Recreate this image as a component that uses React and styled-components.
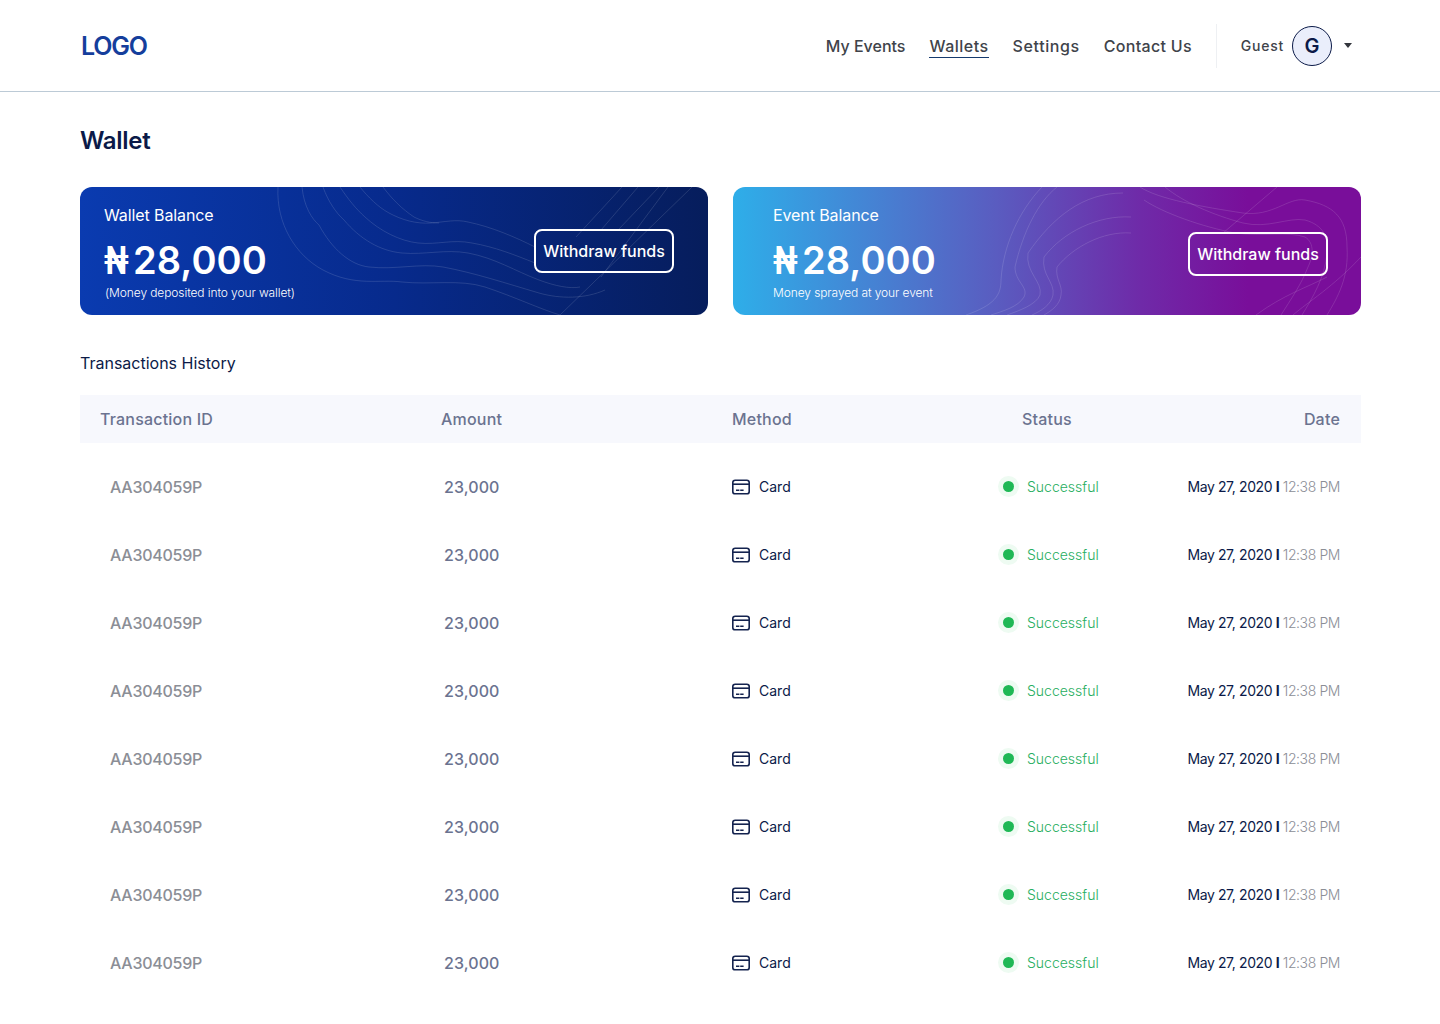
import React from 'react'
import styled, { createGlobalStyle } from 'styled-components'

const GlobalStyle = createGlobalStyle`
    * { box-sizing: border-box; }
    body {
        margin: 0;
        background: #ffffff;
        font-family: 'Inter', 'Liberation Sans', sans-serif;
        color: #0b1a48;
    }
`

const Header = styled.header`
    height: 92px;
    border-bottom: 1px solid #bccad6;
    display: flex;
    align-items: center;
    justify-content: space-between;
    padding: 0 88px 0 81px;
`

const Logo = styled.div`
    font-size: 25px;
    font-weight: 600;
    letter-spacing: -1.2px;
    color: #153e9c;
`

const HeaderRight = styled.div`
    display: flex;
    align-items: center;
`

const Nav = styled.nav`
    display: flex;
    gap: 24px;
    padding-right: 24px;
    height: 44px;
    align-items: center;
    border-right: 1px solid #eef0f3;
`

const NavLink = styled.a`
    font-size: 16px;
    font-weight: 500;
    letter-spacing: ${p => p.$track}px;
    line-height: 22px;
    color: #40434a;
    border-bottom: 1px solid ${p => (p.$active ? '#153a6e' : 'transparent')};
    padding-top: 1px;
    text-decoration: none;
`

const User = styled.div`
    display: flex;
    align-items: center;
    padding-left: 24px;
`

const Guest = styled.span`
    font-size: 14px;
    font-weight: 500;
    letter-spacing: 0.75px;
    color: #40434a;
    margin-right: 8px;
`

const Avatar = styled.div`
    width: 40px;
    height: 40px;
    border-radius: 50%;
    border: 1px solid #0b1a48;
    background: #eaeefb;
    display: flex;
    align-items: center;
    justify-content: center;
    font-size: 20px;
    font-weight: 600;
    color: #0b1a48;
`

const Caret = styled.span`
    width: 0;
    height: 0;
    margin-left: 12px;
    border-left: 4.5px solid transparent;
    border-right: 4.5px solid transparent;
    border-top: 5px solid #33363d;
`

const Main = styled.main`
    padding: 0 79px 0 80px;
`

const Title = styled.h1`
    margin: 0;
    padding-top: 33px;
    font-size: 24px;
    line-height: 32px;
    font-weight: 600;
    letter-spacing: -0.3px;
    color: #0b1a48;
`

const Cards = styled.section`
    display: grid;
    grid-template-columns: 628px 628px;
    gap: 25px;
    margin-top: 30px;
`

const Card = styled.div`
    position: relative;
    height: 128px;
    border-radius: 12px;
    overflow: hidden;
    color: #ffffff;
    background: ${p => p.$bg};
    display: flex;
    align-items: center;
    justify-content: space-between;
    padding: ${p => p.$padding};
`

const Contours = styled.svg`
    position: absolute;
    inset: 0;
    width: 100%;
    height: 100%;
    pointer-events: none;
    fill: none;
    stroke: rgba(255, 255, 255, 0.18);
    stroke-width: 0.7;
`

const CardText = styled.div`
    position: relative;
    display: flex;
    flex-direction: column;
    padding: 4px 0 1px;
`

const CardLabel = styled.div`
    font-size: 16px;
    line-height: 20px;
    font-weight: 400;
    letter-spacing: -0.1px;
`

const CardAmount = styled.div`
    display: flex;
    align-items: baseline;
    font-size: 38px;
    line-height: 48px;
    font-weight: 600;
    margin-top: 11px;
    letter-spacing: 0.1px;
`

const Naira = styled.span`
    display: inline-block;
    font-family: 'Roboto', 'Inter', sans-serif;
    font-weight: 700;
    letter-spacing: 0;
    margin-right: -2px;
    transform: scaleX(0.8);
    transform-origin: left center;
`

const CardNote = styled.div`
    font-size: 12px;
    line-height: 16px;
    font-weight: 300;
    letter-spacing: -0.1px;
    margin-left: ${p => (p.$indent ? '1px' : '0')};
`

const WithdrawButton = styled.button`
    position: relative;
    width: 140px;
    height: 44px;
    border: 2px solid #ffffff;
    border-radius: 8px;
    background: transparent;
    color: #ffffff;
    font-family: inherit;
    font-size: 16px;
    font-weight: 500;
    letter-spacing: 0;
    padding: 0;
    top: ${p => p.$top}px;
`

const SectionTitle = styled.h2`
    margin: 36px 0 0;
    font-size: 16px;
    line-height: 24px;
    font-weight: 400;
    letter-spacing: 0;
    color: #0b1a48;
`

const TableHead = styled.div`
    display: grid;
    grid-template-columns: 341px 291px 290px 1fr auto;
    align-items: center;
    height: 48px;
    margin-top: 20px;
    padding: 0 21px 0 20px;
    background: #f7f8fd;
    font-size: 16px;
    font-weight: 500;
    letter-spacing: 0.2px;
    color: #6b7390;
`

const Rows = styled.div`
    padding-top: 10px;
`

const Row = styled.div`
    display: grid;
    grid-template-columns: 334px 288px 271px 1fr auto;
    align-items: center;
    height: 68px;
    padding: 0 21px 0 30px;
`

const TxId = styled.div`
    font-size: 16px;
    font-weight: 500;
    letter-spacing: -0.25px;
    color: #8b8e96;
`

const Amount = styled.div`
    font-size: 16px;
    font-weight: 500;
    letter-spacing: 0.1px;
    color: #6b7390;
`

const Method = styled.div`
    display: flex;
    align-items: center;
    gap: 9px;
    font-size: 14px;
    color: #0b1a48;
`

const MethodName = styled.span`
    padding-bottom: 2px;
`

const Status = styled.div`
    display: flex;
    align-items: center;
    gap: 13px;
    padding-bottom: 2px;
    font-size: 14px;
    font-weight: 300;
    color: #27ae60;
`

const Dot = styled.span`
    width: 11px;
    height: 11px;
    border-radius: 50%;
    background: #1fb855;
    box-shadow: 0 0 0 5px #eefbf2;
`

const DateCell = styled.div`
    white-space: nowrap;
    text-align: right;
    padding-bottom: 2px;
    font-size: 14px;
    letter-spacing: -0.4px;
    color: #0b1a48;
`

const Time = styled.span`
    font-weight: 300;
    color: #8b8e96;
`

const CardIcon = () => (
    <svg width="18" height="16" viewBox="0 0 18 16" fill="none" stroke="#14234f" strokeWidth="1.6">
        <rect x="0.8" y="1.2" width="16.4" height="13.6" rx="2.4" />
        <path d="M1 5.2h16" />
        <path d="M4 11.2h3.4M8.2 11.2h3.4" />
    </svg>
)

const WalletLines = () => (
    <Contours viewBox="0 0 628 128" preserveAspectRatio="none">
        <path d="M198 0C196 36 215 68 243 83C275 100 300 92 322 95C350 98 380 92 405 100C435 110 460 122 480 128" />
        <path d="M222 0C224 20 232 32 239 38C252 62 270 78 289 80C315 83 340 76 363 80C395 86 425 96 459 106C480 112 505 112 525 103" />
        <path d="M243 0C248 14 256 26 264 33C280 52 300 64 322 66C345 68 365 62 388 66C415 71 435 84 459 93C475 99 490 102 500 100" />
        <path d="M260 0C268 12 276 22 285 30C300 44 320 54 338 56C358 58 372 52 392 56C415 60 435 68 455 76" />
        <path d="M280 0C288 10 298 20 309 26C322 33 336 37 351 36C365 35 376 32 388 35C412 40 435 50 455 60" />
        <path d="M303 0C312 12 322 22 334 30C342 34 350 36 359 36" />
        <path d="M480 128L612 0" />
        <path d="M521 90L588 0" />
        <path d="M538 43L579 0" />
        <path d="M521 43L558 0" />
        <path d="M496 50L542 0" />
    </Contours>
)

const EventLines = () => (
    <Contours viewBox="0 0 628 128" preserveAspectRatio="none">
        <path d="M309 0C285 25 270 60 268 93C268 108 262 118 233 128" />
        <path d="M324 0C305 15 290 45 282 80C282 95 296 100 291 110C285 120 270 124 258 128" />
        <path d="M390 6C350 6 320 30 295 66C292 85 310 95 307 108C303 118 285 124 274 128" />
        <path d="M398 30C365 28 330 45 311 70C308 88 322 95 320 108C318 118 308 124 299 128" />
        <path d="M398 46C370 44 340 60 324 80C322 92 330 98 328 108C327 118 318 124 311 128" />
        <path d="M407 0C425 12 470 20 510 26C540 30 555 10 572 13C600 18 614 30 614 60C616 90 605 110 594 128" />
        <path d="M432 0C450 15 480 28 510 36C535 42 555 30 572 33C590 38 596 50 594 66C592 90 580 110 569 128" />
        <path d="M411 13C430 26 470 40 502 46C530 50 555 44 572 50C582 56 580 70 575 80C568 98 558 112 548 128" />
        <path d="M490 46L544 0" />
        <path d="M523 128C550 108 575 100 594 90" />
        <path d="M560 128C575 115 600 100 628 70" />
    </Contours>
)

const rows = Array.from({ length: 8 }, (_, i) => i)

const App = () => {
    return (
        <>
            <GlobalStyle />
            <Header>
                <Logo>LOGO</Logo>
                <HeaderRight>
                    <Nav>
                        <NavLink $track={0}>My Events</NavLink>
                        <NavLink $track={0.5} $active>Wallets</NavLink>
                        <NavLink $track={0.6}>Settings</NavLink>
                        <NavLink $track={0.3}>Contact Us</NavLink>
                    </Nav>
                    <User>
                        <Guest>Guest</Guest>
                        <Avatar>G</Avatar>
                        <Caret />
                    </User>
                </HeaderRight>
            </Header>
            <Main>
                <Title>Wallet</Title>
                <Cards>
                    <Card $bg="linear-gradient(90deg, #0a3bb0 0%, #072a8c 50%, #061d5c 100%)" $padding="0 34px 0 24px">
                        <WalletLines />
                        <CardText>
                            <CardLabel>Wallet Balance</CardLabel>
                            <CardAmount><Naira>₦</Naira>28,000</CardAmount>
                            <CardNote $indent>(Money deposited into your wallet)</CardNote>
                        </CardText>
                        <WithdrawButton $top={0}>Withdraw funds</WithdrawButton>
                    </Card>
                    <Card $bg="linear-gradient(90deg, #2eaee9 0%, #5a5cc0 42%, #6f2aa8 65%, #790e9a 82%, #790e9a 100%)" $padding="0 33px 0 40px">
                        <EventLines />
                        <CardText>
                            <CardLabel>Event Balance</CardLabel>
                            <CardAmount><Naira>₦</Naira>28,000</CardAmount>
                            <CardNote>Money sprayed at your event</CardNote>
                        </CardText>
                        <WithdrawButton $top={3}>Withdraw funds</WithdrawButton>
                    </Card>
                </Cards>
                <SectionTitle>Transactions History</SectionTitle>
                <TableHead>
                    <div>Transaction ID</div>
                    <div>Amount</div>
                    <div>Method</div>
                    <div>Status</div>
                    <div>Date</div>
                </TableHead>
                <Rows>
                    {rows.map(i => (
                        <Row key={i}>
                            <TxId>AA304059P</TxId>
                            <Amount>23,000</Amount>
                            <Method><CardIcon /><MethodName>Card</MethodName></Method>
                            <Status><Dot />Successful</Status>
                            <DateCell>May 27, 2020 <b>I</b> <Time>12:38 PM</Time></DateCell>
                        </Row>
                    ))}
                </Rows>
            </Main>
        </>
    )
}

export default App
